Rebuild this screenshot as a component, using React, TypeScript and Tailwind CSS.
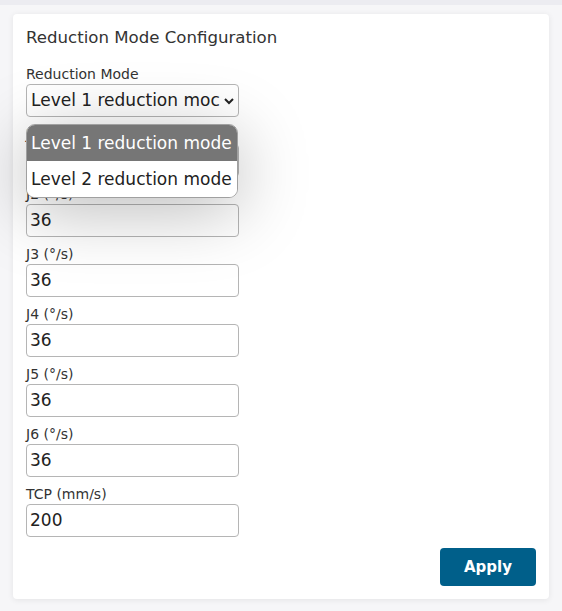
import React from 'react';

type Field = {
  label: string
  value: string
}

const fields: Field[] = [
  { label: 'J1 (°/s)', value: '36' },
  { label: 'J2 (°/s)', value: '36' },
  { label: 'J3 (°/s)', value: '36' },
  { label: 'J4 (°/s)', value: '36' },
  { label: 'J5 (°/s)', value: '36' },
  { label: 'J6 (°/s)', value: '36' },
  { label: 'TCP (mm/s)', value: '200' },
];

const options = ['Level 1 reduction mode', 'Level 2 reduction mode'];

const FieldRow: React.FC<Field> = ({ label, value }) => (
  <div className="flex flex-col">
    <label className="h-[20px] text-[14px] leading-[20px] text-[#333]">{label}</label>
    <div className="flex h-[33px] w-[213px] items-center rounded-[4px] border border-[#b5b5b5] bg-white px-[3px] text-[17px] text-[#222]">
      {value}
    </div>
  </div>
);

const App: React.FC = () => {
  return (
    <div className="min-h-[611px] bg-[#f6f6f8] pt-[14px] pl-[13px] pr-[13px]" style={{ fontFamily: '"DejaVu Sans", Verdana, sans-serif' }}>
      <div className="absolute top-0 left-0 h-[5px] w-full bg-[#ececf1]" />
      <div className="relative flex w-[536px] flex-col rounded-[4px] bg-white px-[13px] pt-[12px] pb-[13px] shadow-[0_1px_6px_rgba(0,0,0,0.08)]">
        <h2 className="text-[16.6px] leading-[24px] text-[#333]">Reduction Mode Configuration</h2>

        <div className="mt-[14px] flex flex-col gap-[7px]">
          <div className="relative flex flex-col">
            <label className="h-[20px] text-[14px] leading-[20px] text-[#333]">Reduction Mode</label>
            <div className="flex h-[33px] w-[213px] items-center justify-between rounded-[4px] border border-[#b5b5b5] bg-white pl-[4px] pr-[3px] text-[17px] text-[#222]">
              <span className="overflow-hidden whitespace-nowrap">Level 1 reduction moc</span>
              <svg width="12" height="12" viewBox="0 0 12 12" className="shrink-0">
                <path d="M2 4 L6 8 L10 4" fill="none" stroke="#222" strokeWidth="2" />
              </svg>
            </div>

            <div className="absolute top-[60px] left-0 z-10 w-[212px] overflow-hidden rounded-[9px] border border-[#a0a0a0] bg-white shadow-[0_12px_70px_rgba(0,0,0,0.28)]">
              {options.map((opt, i) => (
                <div
                  key={opt}
                  className={
                    i === 0
                      ? 'h-[36px] whitespace-nowrap bg-[#767676] px-[4px] text-[17px] leading-[36px] text-white'
                      : 'h-[36px] whitespace-nowrap bg-white px-[4px] text-[17px] leading-[36px] text-[#222]'
                  }
                >
                  {opt}
                </div>
              ))}
            </div>
          </div>

          {fields.map((f) => (
            <FieldRow key={f.label} label={f.label} value={f.value} />
          ))}
        </div>

        <div className="mt-[11px] flex justify-end">
          <button className="h-[38px] w-[96px] rounded-[4px] bg-[#005f8a] text-[15px] font-bold text-white">
            Apply
          </button>
        </div>
      </div>
    </div>
  );
};

export default App;
